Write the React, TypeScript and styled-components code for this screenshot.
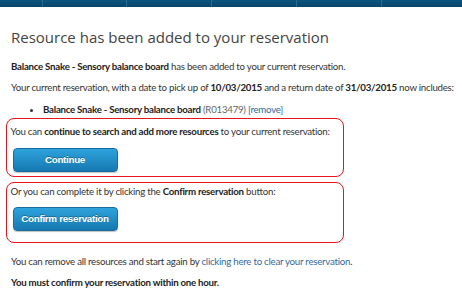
import React from "react";
import styled, { createGlobalStyle } from "styled-components";

const GlobalStyle = createGlobalStyle`
  html, body {
    margin: 0;
    padding: 0;
    background: #ffffff;
  }
  body {
    font-family: Lato, "Liberation Sans", sans-serif;
    color: #333333;
  }
`;

const NavBar = styled.nav`
  height: 7px;
  display: grid;
  grid-template-columns: 43px 84px 85px 85px 85px 85px 1fr;
  background: linear-gradient(#0d5580, #064568);
  div {
    border-right: 1px solid #2a6a90;
  }
  div:last-child {
    border-right: none;
  }
`;

const Page = styled.main`
  padding: 19px 11px 0 11px;
`;

const Title = styled.h1`
  margin: 0 0 8px 0;
  font-family: "Open Sans", sans-serif;
  font-size: 15px;
  line-height: 22px;
  font-weight: 400;
  color: #444444;
`;

const Para = styled.p`
  margin: 0;
  font-size: 9.7px;
  letter-spacing: -0.25px;
  line-height: 21px;
  white-space: nowrap;
  b {
    font-weight: 700;
    color: #222;
  }
  a {
    color: #2f6a9e;
    text-decoration: none;
  }
`;

const Items = styled.ul`
  margin: 0;
  padding-left: 32px;
  font-size: 9.7px;
  letter-spacing: -0.25px;
  line-height: 22px;
  white-space: nowrap;
  li b {
    color: #222;
  }
  .code {
    color: #666;
  }
  a {
    color: #2f6a9e;
    text-decoration: none;
  }
`;

const Option = styled.section<{ $top: number; $pad: string; $btn: number }>`
  width: 329px;
  margin: ${(p) => p.$top}px 0 0 -5px;
  border: 1.5px solid #e8141c;
  border-radius: 8px;
  padding: ${(p) => p.$pad};
  ${Para} {
    line-height: 16px;
  }
  button {
    margin-top: ${(p) => p.$btn}px;
  }
`;

const Button = styled.button`
  display: block;
  margin-left: 2px;
  width: 105px;
  height: 24px;
  padding: 0;
  border: 1px solid #1a6b9e;
  border-radius: 4px;
  background: linear-gradient(#2ea3dc, #1678b0);
  box-shadow: 0 1px 1px rgba(0, 0, 0, 0.25);
  color: #ffffff;
  font-family: "Liberation Sans", Arial, sans-serif;
  font-size: 9.8px;
  letter-spacing: -0.3px;
  font-weight: 700;
  white-space: nowrap;
  text-shadow: 0 -1px 0 rgba(0, 0, 0, 0.3);
  cursor: pointer;
`;

const Footer = styled.div`
  margin-top: 8px;
`;

export default function App() {
  return (
    <>
      <GlobalStyle />
      <NavBar>
        <div />
        <div />
        <div />
        <div />
        <div />
        <div />
        <div />
      </NavBar>
      <Page>
        <Title>Resource has been added to your reservation</Title>
        <Para>
          <b>Balance Snake - Sensory balance board</b> has been added to your
          current reservation.
        </Para>
        <Para>
          Your current reservation, with a date to pick up of <b>10/03/2015</b>{" "}
          and a return date of <b>31/03/2015</b> now includes:
        </Para>
        <Items>
          <li>
            <b>Balance Snake - Sensory balance board</b>{" "}
            <span className="code">(R013479)</span> <a href="#">[remove]</a>
          </li>
        </Items>
        <Option $top={-2} $pad="4px 3.5px 4.5px" $btn={8.5}>
          <Para>
            You can <b>continue to search and add more resources</b> to your
            current reservation:
          </Para>
          <Button>Continue</Button>
        </Option>
        <Option $top={5} $pad="0 3.5px 11px" $btn={7.5}>
          <Para>
            Or you can complete it by clicking the <b>Confirm reservation</b>{" "}
            button:
          </Para>
          <Button>Confirm reservation</Button>
        </Option>
        <Footer>
          <Para>
            You can remove all resources and start again by{" "}
            <a href="#">clicking here to clear your reservation</a>.
          </Para>
          <Para>
            <b>You must confirm your reservation within one hour.</b>
          </Para>
        </Footer>
      </Page>
    </>
  );
}
